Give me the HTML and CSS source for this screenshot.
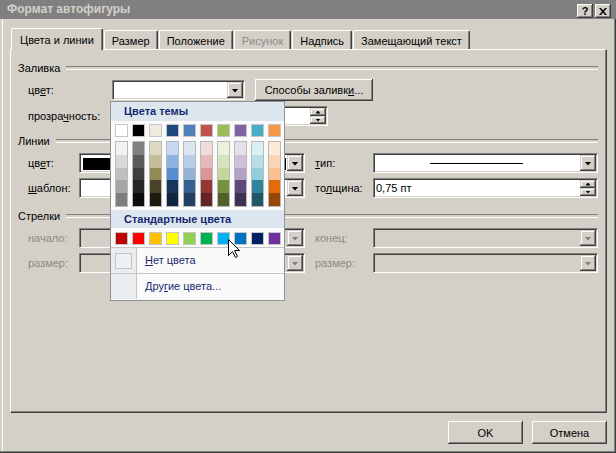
FILE: index.html
```html
<!DOCTYPE html>
<html lang="ru">
<head>
<meta charset="utf-8">
<title>Формат автофигуры</title>
<link rel="stylesheet" href="styles.css">
</head>
<body>
<div class="window">
  <div class="titlebar">
    <span class="title">Формат автофигуры</span>
    <div class="tb-buttons">
      <span class="tb-btn">?</span>
      <span class="tb-btn"><svg width="8" height="7" viewBox="0 0 8 7"><path d="M0 0h2l2 2.5L6 0h2L5 3.5 8 7H6L4 4.5 2 7H0l3-3.5z" fill="#000"/></svg></span>
    </div>
  </div>
  <div class="body">
    <div class="tabs">
      <div class="tab active">Цвета и линии</div>
      <div class="tab">Размер</div>
      <div class="tab">Положение</div>
      <div class="tab disabled">Рисунок</div>
      <div class="tab">Надпись</div>
      <div class="tab">Замещающий текст</div>
    </div>
    <div class="panel">
      <div class="group">Заливка</div>
      <div class="row r-first">
        <span class="lbl-fill">цв<u>е</u>т:</span>
        <div class="combo w-fill"><div class="field"></div><span class="ddbtn"></span></div>
        <span class="btn btn-fill">Способы заливк<u>и</u>...</span>
      </div>
      <div class="row r-next4">
        <span class="lbl-fill">прозра<u>ч</u>ность:</span>
        <div class="track"></div>
        <div class="combo w-spin"><div class="field"></div><span class="spin"><i class="up"></i><i class="down"></i></span></div>
      </div>

      <div class="group g-next">Линии</div>
      <div class="row r-first">
        <span class="lbl">цв<u>е</u>т:</span>
        <div class="combo w-left"><div class="field"><span class="swatch-black"></span></div><span class="ddbtn"></span></div>
        <span class="lbl-r"><u>т</u>ип:</span>
        <div class="combo w-right"><div class="field center"><span class="line-sample"></span></div><span class="ddbtn"></span></div>
      </div>
      <div class="row r-next3">
        <span class="lbl"><u>ш</u>аблон:</span>
        <div class="combo w-left"><div class="field"></div><span class="ddbtn"></span></div>
        <span class="lbl-r">то<u>л</u>щина:</span>
        <div class="combo w-right"><div class="field text">0,75 пт</div><span class="spin"><i class="up"></i><i class="down"></i></span></div>
      </div>

      <div class="group g-next2">Стрелки</div>
      <div class="row r-first disabled">
        <span class="lbl">начало:</span>
        <div class="combo w-left off"><div class="field"></div><span class="ddbtn"></span></div>
        <span class="lbl-r">конец:</span>
        <div class="combo w-right off"><div class="field"></div><span class="ddbtn"></span></div>
      </div>
      <div class="row r-next3 disabled">
        <span class="lbl">размер:</span>
        <div class="combo w-left off"><div class="field"></div><span class="ddbtn"></span></div>
        <span class="lbl-r">размер:</span>
        <div class="combo w-right off"><div class="field"></div><span class="ddbtn"></span></div>
      </div>
    </div>
    <div class="actions">
      <span class="btn btn-act">OK</span>
      <span class="btn btn-act">Отмена</span>
    </div>
  </div>

  <div class="popup">
    <div class="pp-head">Цвета темы</div>
    <div class="pp-row">
      <span class="sw" style="background:#FFFFFF"></span>
      <span class="sw" style="background:#000000"></span>
      <span class="sw" style="background:#EEECE1"></span>
      <span class="sw" style="background:#1F497D"></span>
      <span class="sw" style="background:#4F81BD"></span>
      <span class="sw" style="background:#C0504D"></span>
      <span class="sw" style="background:#9BBB59"></span>
      <span class="sw" style="background:#8064A2"></span>
      <span class="sw" style="background:#4BACC6"></span>
      <span class="sw" style="background:#F79646"></span>
    </div>
    <div class="pp-grad">
      <div class="col"><i style="background:#F2F2F2"></i><i style="background:#D9D9D9"></i><i style="background:#BFBFBF"></i><i style="background:#A6A6A6"></i><i style="background:#7F7F7F"></i></div>
      <div class="col"><i style="background:#7F7F7F"></i><i style="background:#595959"></i><i style="background:#3F3F3F"></i><i style="background:#262626"></i><i style="background:#0C0C0C"></i></div>
      <div class="col"><i style="background:#DDD9C3"></i><i style="background:#C4BD97"></i><i style="background:#938953"></i><i style="background:#494429"></i><i style="background:#1D1B10"></i></div>
      <div class="col"><i style="background:#C6D9F0"></i><i style="background:#8DB3E2"></i><i style="background:#548DD4"></i><i style="background:#17365D"></i><i style="background:#0F243E"></i></div>
      <div class="col"><i style="background:#DBE5F1"></i><i style="background:#B8CCE4"></i><i style="background:#95B3D7"></i><i style="background:#366092"></i><i style="background:#244061"></i></div>
      <div class="col"><i style="background:#F2DCDB"></i><i style="background:#E5B9B7"></i><i style="background:#D99694"></i><i style="background:#953734"></i><i style="background:#632423"></i></div>
      <div class="col"><i style="background:#EBF1DD"></i><i style="background:#D7E3BC"></i><i style="background:#C3D69B"></i><i style="background:#76923C"></i><i style="background:#4F6128"></i></div>
      <div class="col"><i style="background:#E5E0EC"></i><i style="background:#CCC1D9"></i><i style="background:#B2A2C7"></i><i style="background:#5F497A"></i><i style="background:#3F3151"></i></div>
      <div class="col"><i style="background:#DBEEF3"></i><i style="background:#B7DDE8"></i><i style="background:#92CDDC"></i><i style="background:#31859B"></i><i style="background:#205867"></i></div>
      <div class="col"><i style="background:#FDEADA"></i><i style="background:#FBD5B5"></i><i style="background:#FAC08F"></i><i style="background:#E36C09"></i><i style="background:#974806"></i></div>
    </div>
    <div class="pp-head pp-head2">Стандартные цвета</div>
    <div class="pp-row pp-std">
      <span class="sw" style="background:#C00000"></span>
      <span class="sw" style="background:#FF0000"></span>
      <span class="sw" style="background:#FFC000"></span>
      <span class="sw" style="background:#FFFF00"></span>
      <span class="sw" style="background:#92D050"></span>
      <span class="sw" style="background:#00B050"></span>
      <span class="sw" style="background:#00B0F0"></span>
      <span class="sw" style="background:#0070C0"></span>
      <span class="sw" style="background:#002060"></span>
      <span class="sw" style="background:#7030A0"></span>
    </div>
    <div class="pp-sep"></div>
    <div class="pp-item"><span class="pp-icon"><span class="nocolor"></span></span><span class="pp-text"><u>Н</u>ет цвета</span></div>
    <div class="pp-sep"></div>
    <div class="pp-item"><span class="pp-icon"></span><span class="pp-text">Дру<u>г</u>ие цвета...</span></div>
  </div>

  <svg class="cursor" width="13" height="20" viewBox="0 0 13 20"><path d="M0.5 0.5V16.5L4.5 12.5L7.5 18.5L9.5 17.5L6.5 11.5H11.5Z" fill="#fff" stroke="#000" stroke-width="1" stroke-linejoin="miter"/></svg>
</div>
</body>
</html>
```
FILE: styles.css
```css
* { box-sizing: border-box; }
html, body { margin: 0; padding: 0; }
body {
  width: 616px;
  height: 453px;
  overflow: hidden;
  font: 11px "Liberation Sans", Arial, sans-serif;
  color: #000;
  background: #d4d0c8;
}
u { text-decoration: underline; text-underline-offset: 1px; }

.window {
  position: relative;
  width: 616px;
  height: 453px;
  background: #d4d0c8;
  box-shadow: inset -1px -1px #404040, inset -2px -2px #808080, inset 2px 0 #d4d0c8, inset 3px 0 #fff;
}

/* title bar */
.titlebar {
  height: 19px;
  background: #808080;
  display: flex;
  align-items: flex-start;
  padding: 0 5px 0 7px;
}
.title {
  flex: 1;
  font-weight: bold;
  font-size: 12px;
  line-height: 19px;
  color: #d4d0c8;
}
.tb-buttons { display: flex; gap: 2px; margin-top: 4px; }
.tb-btn {
  width: 16px;
  height: 14px;
  background: #d4d0c8;
  box-shadow: inset -1px -1px #404040, inset 1px 1px #fff, inset -2px -2px #808080;
  display: flex;
  align-items: center;
  justify-content: center;
  font-weight: bold;
  font-size: 11px;
  line-height: 14px;
}

/* dialog body */
.body { padding: 9px 9px 0 10px; }
.tabs {
  display: flex;
  align-items: flex-end;
  height: 21px;
  padding-left: 1px;
  gap: 1px;
  position: relative;
  z-index: 1;
}
.tab {
  height: 19px;
  padding: 4px 7px 0;
  border: 1px solid #fff;
  border-bottom: none;
  border-right-color: #404040;
  box-shadow: inset -1px 0 #808080;
  border-radius: 2px 2px 0 0;
  line-height: 13px;
  white-space: nowrap;
  background: #d4d0c8;
}
.tab.active {
  height: 22px;
  margin-bottom: -1px;
  padding: 5px 8px 0;
}
.tab.disabled { color: #8a8a8a; }

.panel {
  width: 597px;
  height: 364px;
  border: 1px solid;
  border-color: #fff #404040 #404040 #fff;
  box-shadow: inset -1px -1px #808080;
  padding: 11px 8px 0 7px;
}
.group {
  display: flex;
  align-items: center;
  height: 14px;
  line-height: 14px;
}
.group::after {
  content: "";
  flex: 1;
  height: 2px;
  border-top: 1px solid #808080;
  border-bottom: 1px solid #fff;
  margin-left: 6px;
}
.g-next { margin-top: 7px; }
.g-next2 { margin-top: 10px; }

.row {
  display: flex;
  align-items: center;
  height: 22px;
  padding-left: 10px;
  white-space: nowrap;
}
.r-first { margin-top: 4px; }
.r-next4 { margin-top: 4px; }
.r-next3 { margin-top: 3px; }
.row.disabled { color: #8a8a8a; }
.lbl-fill { width: 84px; }
.lbl { width: 51px; }
.lbl-r { width: 58px; margin-left: 10px; }

/* combo boxes */
.combo {
  display: flex;
  height: 20px;
  border: 1px solid;
  border-color: #808080 #fff #fff #808080;
  box-shadow: inset 1px 1px #404040, inset -1px -1px #d4d0c8;
  padding: 1px;
  background: #fff;
}
.combo.off { background: #d4d0c8; }
.combo .field { flex: 1; display: flex; align-items: center; min-width: 0; }
.combo .field.center { justify-content: center; }
.combo .field.text { padding-left: 1px; line-height: 16px; }
.w-fill { width: 133px; }
.w-spin { width: 58px; margin-left: 8px; }
.w-left { width: 226px; }
.w-right { width: 225px; }
.track { width: 150px; }

.ddbtn, .spin i {
  background: #d4d0c8;
  box-shadow: inset -1px -1px #404040, inset 1px 1px #d4d0c8, inset -2px -2px #808080, inset 2px 2px #fff;
}
.ddbtn {
  width: 16px;
  height: 16px;
  display: flex;
  align-items: center;
  justify-content: center;
}
.ddbtn::before {
  content: "";
  width: 7px;
  height: 4px;
  margin: 1px 0 0 0;
  background: #000;
  clip-path: polygon(0 0, 100% 0, 50% 100%);
}
.off .ddbtn::before {
  background: #808080;
  filter: drop-shadow(1px 1px 0 #fff);
}
.spin { width: 16px; display: flex; flex-direction: column; }
.spin i {
  height: 8px;
  display: flex;
  align-items: center;
  justify-content: center;
}
.spin i::before {
  content: "";
  width: 5px;
  height: 3px;
  background: #000;
}
.spin i.up::before { clip-path: polygon(50% 0, 100% 100%, 0 100%); }
.spin i.down::before { clip-path: polygon(0 0, 100% 0, 50% 100%); }

.swatch-black {
  flex: 1;
  height: 12px;
  margin: 1px 1px 0 2px;
  background: #000;
}
.line-sample {
  width: 93px;
  height: 1px;
  background: #000;
  margin-left: -2px;
}

/* buttons */
.btn {
  display: inline-flex;
  align-items: center;
  justify-content: center;
  background: #d4d0c8;
  box-shadow: inset -1px -1px #404040, inset 1px 1px #fff, inset -2px -2px #808080, inset 2px 2px #d4d0c8;
  white-space: nowrap;
}
.btn-fill { width: 118px; height: 22px; margin-left: 10px; }
.actions {
  display: flex;
  justify-content: flex-end;
  gap: 9px;
  margin-top: 8px;
}
.btn-act { width: 75px; height: 23px; }

/* color popup */
.popup {
  position: absolute;
  left: 110px;
  top: 101px;
  width: 175px;
  height: 200px;
  border: 1px solid #8f9398;
  background: #fafafa;
  z-index: 5;
}
.pp-head {
  height: 19px;
  line-height: 19px;
  padding-left: 13px;
  background: #dde6ee;
  color: #15296e;
  font-weight: bold;
  font-size: 11px;
}
.pp-head2 { height: 18px; line-height: 18px; margin-top: 3px; }
.pp-row {
  display: flex;
  gap: 4px;
  padding-left: 4px;
  margin-top: 3px;
}
.pp-std { margin-top: 4px; }
.sw {
  width: 13px;
  height: 13px;
  border: 1px solid #c5c5c5;
}
.pp-grad {
  display: flex;
  gap: 4px;
  padding-left: 4px;
  margin-top: 4px;
}
.col {
  width: 13px;
  height: 66px;
  border: 1px solid #b9b9b9;
  display: flex;
  flex-direction: column;
}
.col i { flex: 1; }
.pp-sep {
  height: 1px;
  background: #c5c5c5;
  margin-top: 2px;
}
.pp-item + .pp-sep { margin-top: 0; }
.pp-item {
  display: flex;
  height: 25px;
  align-items: stretch;
  color: #1a2a70;
}
.pp-icon {
  width: 26px;
  background: #e9edf0;
  border-right: 1px solid #c5c5c5;
  display: flex;
  align-items: center;
  justify-content: center;
}
.nocolor {
  width: 17px;
  height: 16px;
  border: 1px solid #c5c5c5;
  background: #eef1f3;
}
.pp-text {
  padding-left: 8px;
  line-height: 25px;
  white-space: nowrap;
}

.cursor {
  position: absolute;
  left: 228px;
  top: 239px;
  z-index: 10;
}
```
